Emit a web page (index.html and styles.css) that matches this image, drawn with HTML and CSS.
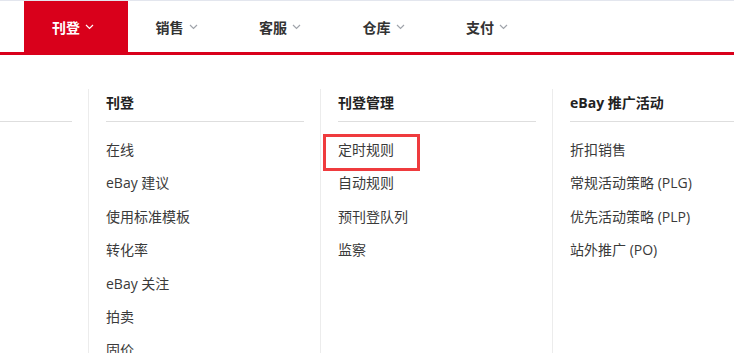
FILE: index.html
```html
<!DOCTYPE html>
<html lang="zh-CN">

<head>
    <meta charset="UTF-8">
    <meta name="viewport" content="width=device-width, initial-scale=1.0">
    <title>刊登</title>
    <link rel="stylesheet" href="styles.css">
</head>

<body>

    <!-- Top navigation -->
    <nav class="topnav">
        <a class="nav-item active" href="#">刊登
            <svg class="caret" viewBox="0 0 9 6"><path d="M1 1l3.5 3.5L8 1" /></svg>
        </a>
        <a class="nav-item" href="#">销售
            <svg class="caret" viewBox="0 0 9 6"><path d="M1 1l3.5 3.5L8 1" /></svg>
        </a>
        <a class="nav-item" href="#">客服
            <svg class="caret" viewBox="0 0 9 6"><path d="M1 1l3.5 3.5L8 1" /></svg>
        </a>
        <a class="nav-item" href="#">仓库
            <svg class="caret" viewBox="0 0 9 6"><path d="M1 1l3.5 3.5L8 1" /></svg>
        </a>
        <a class="nav-item" href="#">支付
            <svg class="caret" viewBox="0 0 9 6"><path d="M1 1l3.5 3.5L8 1" /></svg>
        </a>
    </nav>

    <!-- Dropdown menu -->
    <div class="menu">
        <div class="menu-col partial">
            <h3 class="col-title">&nbsp;</h3>
        </div>
        <div class="menu-col">
            <h3 class="col-title">刊登</h3>
            <ul>
                <li>在线</li>
                <li>eBay 建议</li>
                <li>使用标准模板</li>
                <li>转化率</li>
                <li>eBay 关注</li>
                <li>拍卖</li>
                <li>固价</li>
            </ul>
        </div>
        <div class="menu-col">
            <h3 class="col-title">刊登管理</h3>
            <ul>
                <li class="highlight">定时规则</li>
                <li>自动规则</li>
                <li>预刊登队列</li>
                <li>监察</li>
            </ul>
        </div>
        <div class="menu-col">
            <h3 class="col-title">eBay 推广活动</h3>
            <ul>
                <li>折扣销售</li>
                <li>常规活动策略 (PLG)</li>
                <li>优先活动策略 (PLP)</li>
                <li>站外推广 (PO)</li>
            </ul>
        </div>
    </div>

</body>

</html>
```

FILE: styles.css
```css
/* Basic Reset */

* {
    box-sizing: border-box;
    margin: 0;
    padding: 0;
}

html,
body {
    height: 100%;
    overflow: hidden;
}

body {
    font-family: "Open Sans", "Noto Sans CJK SC", sans-serif;
    font-size: 14px;
    color: #333;
    background: #fff;
    border-top: 1px solid #e3e6ee;
}
/* Top Navigation */

.topnav {
    display: flex;
    height: 54px;
    padding-left: 24px;
    border-bottom: 3px solid #d9001b;
}

.nav-item {
    display: flex;
    align-items: center;
    gap: 5px;
    width: 103.5px;
    padding-left: 28px;
    color: #333;
    font-weight: bold;
    text-decoration: none;
}

.nav-item.active {
    background: #d9001b;
    color: #fff;
}

.caret {
    width: 9px;
    height: 6px;
    fill: none;
    stroke: #a0a4ab;
    stroke-width: 1.2;
}

.active .caret {
    stroke: #fff;
}
/* Dropdown */

.menu {
    display: flex;
    padding-top: 34px;
    height: 100%;
}

.menu-col {
    flex: none;
    width: 232px;
    padding: 0 16px 0 17px;
    border-left: 1px solid #ececec;
}

.menu-col.partial {
    width: 88px;
    padding-left: 0;
    border-left: none;
}

.col-title {
    font-size: 14px;
    font-weight: bold;
    color: #222;
    line-height: 20px;
    padding: 4px 0 8px;
    border-bottom: 1px solid #dedede;
    white-space: nowrap;
}

.menu-col ul {
    list-style: none;
    padding-top: 11px;
}

.menu-col li {
    line-height: 33.4px;
    color: #3a3a3a;
    white-space: nowrap;
}

.highlight {
    position: relative;
}

.highlight::after {
    content: "";
    position: absolute;
    left: -15px;
    top: 1px;
    width: 91px;
    height: 31px;
    border: 3px solid #ef3b3e;
}
```
